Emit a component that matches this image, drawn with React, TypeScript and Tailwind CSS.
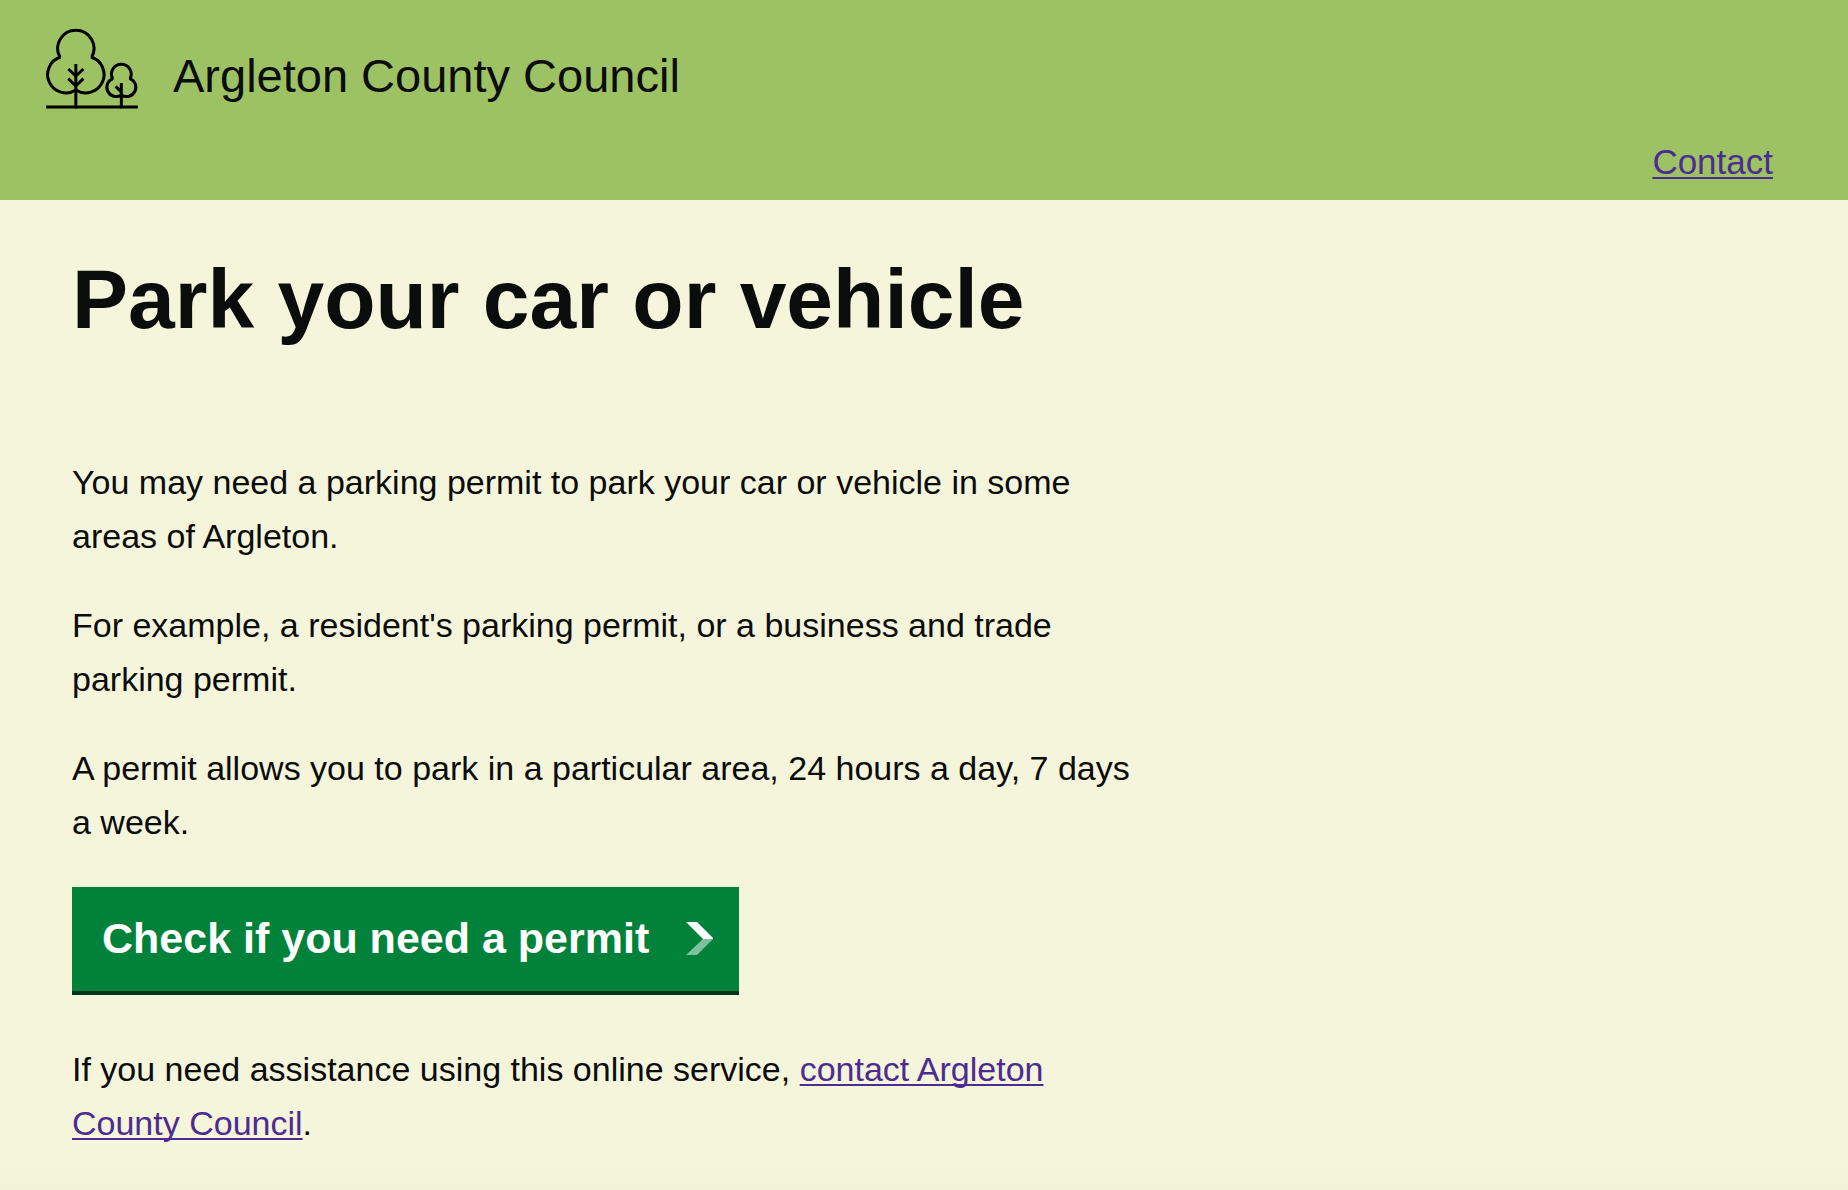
function TreesLogo() {
  return (
    <svg
      viewBox="48 54 276 243"
      className="h-[81px] w-[92px] shrink-0 overflow-visible"
      fill="none"
      stroke="#000"
      strokeWidth="9"
      aria-hidden="true"
    >
      <path d="M48 291H324" />
      <path d="M137.500 162V295" />
      <path d="M115 177L137.500 198L160 177M115 206L137.500 228L160 206" />
      <path d="M90 142A54.500 54.500 0 1 1 185 142" />
      <path d="M92 141A55 55 0 1 0 137.500 240A55 55 0 1 0 183 141" />
      <path d="M274 219V295" />
      <path d="M257 229L273 245" />
      <path d="M248 206A29.500 29.500 0 1 1 300 206" />
      <path d="M250 205A28 28 0 1 0 274 255A28 28 0 1 0 298 205" />
    </svg>
  );
}

const linkClass =
  "text-[#4c2c92] underline decoration-2 underline-offset-[3px] [text-decoration-skip-ink:none]";

export default function App() {
  return (
    <div className="flex min-h-screen flex-col bg-[#f5f5dc] font-['Liberation_Sans',Arial,sans-serif] text-[34px] leading-[54px] text-[#0b0c0c]">
      <header className="bg-[#9dc263] pt-7 pr-[75px] pb-[11px] pl-[46px]">
        <div className="flex items-center gap-[35px]">
          <TreesLogo />
          <span className="pt-[14px] text-[47px]">Argleton County Council</span>
        </div>
        <nav className="mt-[26px] flex justify-end text-[35px]">
          <a href="#contact" className={linkClass}>
            Contact
          </a>
        </nav>
      </header>
      <main className="px-[72px] pt-[51px]">
        <h1 className="text-[84px] leading-[96px] font-bold">Park your car or vehicle</h1>
        <div className="mt-[108px] flex max-w-[1078px] flex-col gap-[35px]">
          <p>
            You may need a parking permit to park your car or vehicle in some areas of Argleton.
          </p>
          <p>
            For example, a resident's parking permit, or a business and trade parking permit.
          </p>
          <p>
            A permit allows you to park in a particular area, 24 hours a day, 7 days a week.
          </p>
        </div>
        <button
          type="button"
          className="mt-[38px] flex items-center gap-[37px] border-b-4 border-[#003618] bg-[#00823b] pt-6 pr-[26px] pb-[26px] pl-[30px] text-[43px] font-bold text-white"
        >
          Check if you need a permit
          <svg viewBox="0 0 27 34" className="h-[34px] w-[27px]" aria-hidden="true">
            <path d="M0 1H11L27 17V18H17Z" fill="#fff" />
            <path d="M17 18H27L11 34H0Z" fill="#80c19d" />
          </svg>
        </button>
        <p className="mt-[47px] max-w-[1078px]">
          If you need assistance using this online service,{" "}
          <a href="#assistance" className={linkClass}>
            contact Argleton County Council
          </a>
          .
        </p>
      </main>
      <div className="mt-auto h-7 bg-linear-to-b from-[#f5f5dc] to-[#f2f2d9]" />
    </div>
  );
}
